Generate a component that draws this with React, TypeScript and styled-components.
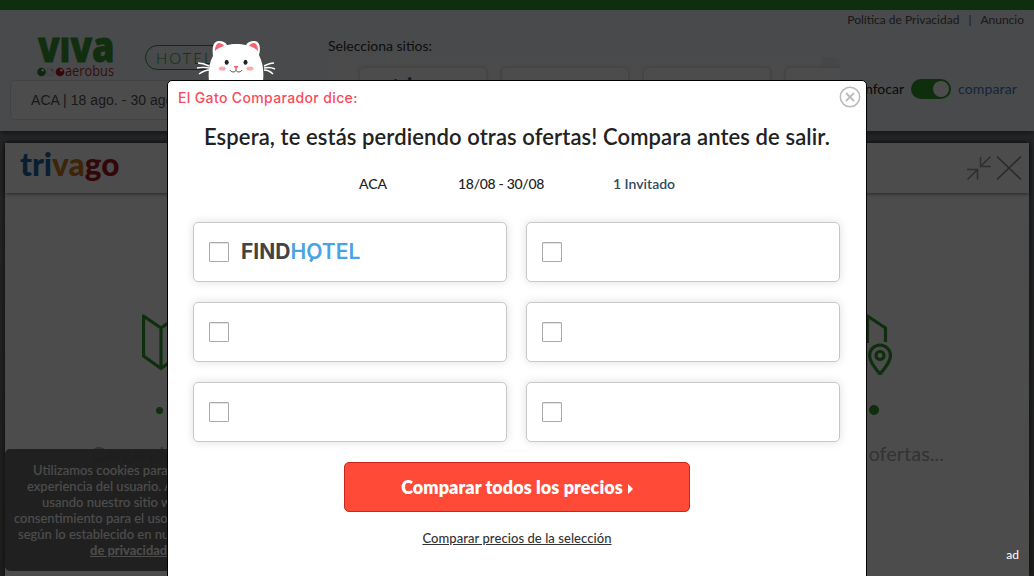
import React from 'react';
import styled, { createGlobalStyle } from 'styled-components';

const Global = createGlobalStyle`
  * { box-sizing: border-box; }
  html, body { margin: 0; height: 576px; overflow: hidden; }
  body { font-family: Lato, sans-serif; background: #7d828a; color: #222; }
`;

const Page = styled.div`
  position: relative;
  width: 1034px;
  height: 576px;
  overflow: hidden;
  display: flex;
  flex-direction: column;
  background: linear-gradient(#7c8188 0 30%, #6b6a66 100%);
`;

const Header = styled.header`
  display: grid;
  grid-template-columns: 328px 512px 194px;
  flex: none;
  height: 131px;
  border-top: 10px solid #309930;
  background: linear-gradient(#f5f7fa, #f7f9fd);
  box-shadow: 0 2px 6px rgba(0, 0, 0, 0.5);
`;

const BrandColumn = styled.div`
  display: flex;
  flex-direction: column;
  padding: 25px 0 0 10px;
`;

const BrandRow = styled.div`
  display: flex;
  height: 45px;
  padding-left: 26px;
`;

const HotelPill = styled.div`
  width: 90px;
  height: 25px;
  margin: 10px 0 0 29px;
  padding-left: 10px;
  border: 1px solid #309930;
  border-radius: 13px;
  color: #309930;
  font-size: 15px;
  font-weight: 300;
  line-height: 24px;
  letter-spacing: 2px;
`;

const SearchBox = styled.div`
  height: 40px;
  padding-left: 20px;
  border: 1px solid #dde0e8;
  border-radius: 4px;
  background: #fdfdff;
  font: 14px/38px 'Liberation Sans', sans-serif;
  letter-spacing: 0.05px;
  color: #555;
`;

const SitesColumn = styled.div`
  padding-top: 27px;
`;

const SitesLabel = styled.div`
  height: 20px;
  font-size: 14px;
  line-height: 17px;
  color: #333;
`;

const SitesStrip = styled.div`
  display: flex;
  gap: 14px;
  height: 64px;
  margin-left: 1px;
  padding: 10px 0 0 30px;
  overflow: hidden;
  border-radius: 5px;
  background: linear-gradient(90deg, #fbfbfb 96%, #e8eef8 97%);
`;

const SiteCard = styled.div`
  flex: none;
  width: 128px;
  padding: 8px 0 0 32px;
  border: 1px solid #e3e3e3;
  border-radius: 5px;
  background: #fdfdfd;
  box-shadow: 0 0 4px rgba(0, 0, 0, 0.12);
`;

const ToolsColumn = styled.div`
  display: flex;
  flex-direction: column;
  align-items: flex-end;
`;

const LegalLinks = styled.div`
  display: flex;
  gap: 9px;
  padding: 2px 10px 0 0;
  font-size: 12px;
  line-height: 16px;
  color: #555;
`;

const ToggleRow = styled.div`
  display: flex;
  align-items: center;
  gap: 7px;
  margin-top: 51px;
  padding-right: 17px;
  font-size: 14px;
  line-height: 20px;
  color: #222;
`;

const Toggle = styled.div`
  display: flex;
  justify-content: flex-end;
  width: 40px;
  height: 20px;
  padding: 2px;
  border-radius: 10px;
  background: #309930;

  &::after {
    content: '';
    width: 16px;
    border-radius: 50%;
    background: #fff;
  }
`;

const CompareLabel = styled.span`
  color: #3f7ecb;
  letter-spacing: 0.14px;
`;

const Panel = styled.section`
  flex: 1;
  display: flex;
  flex-direction: column;
  margin: 12px 5px 0;
  background: #fff;
  box-shadow: 0 0 7px rgba(0, 0, 0, 0.7);
`;

const PanelHeader = styled.div`
  display: flex;
  justify-content: space-between;
  height: 50px;
  padding: 7px 7px 0 15px;
  box-shadow: 0 1px 4px rgba(0, 0, 0, 0.5);
`;

const Loading = styled.div`
  display: flex;
  flex-direction: column;
  padding: 120px 85px 0 86px;
`;

const Maps = styled.div`
  display: flex;
  justify-content: space-between;
  padding: 0 52px 0 51px;
`;

const Dots = styled.div`
  display: flex;
  justify-content: space-between;
  align-items: center;
  height: 14px;
  margin-top: 28px;
  padding: 0 65px 0 65px;
`;

const Dot = styled.span<{ $size: number }>`
  width: ${(p) => p.$size}px;
  height: ${(p) => p.$size}px;
  border-radius: 50%;
  background: #309930;
`;

const LoadingText = styled.div`
  display: flex;
  justify-content: space-between;
  margin-top: 23px;
  font-size: 20px;
  line-height: 26px;
  color: #aaa;
`;

const CookieNotice = styled.aside`
  position: absolute;
  left: 5px;
  top: 449px;
  width: 320px;
  height: 122px;
  padding-top: 13px;
  border-radius: 5px;
  background: rgba(92, 92, 92, 0.9);
  color: #fff;
  font-size: 13px;
  font-weight: 500;
  line-height: 16px;
  white-space: nowrap;
`;

const CookieLine = styled.div<{ $indent: number }>`
  padding-left: ${(p) => p.$indent}px;
`;

const PolicyLink = styled.b`
  text-decoration: underline;
`;

const Overlay = styled.div`
  position: absolute;
  inset: 0;
  background: rgba(0, 0, 0, 0.7);
`;

const AdLabel = styled.span`
  position: absolute;
  right: 15px;
  bottom: 13px;
  font-size: 12px;
  line-height: 16px;
  color: #fff;
`;

const CatArt = styled.svg`
  position: absolute;
  left: 196px;
  top: 39px;
`;

const Modal = styled.div`
  position: absolute;
  left: 167px;
  top: 80px;
  width: 700px;
  height: 520px;
  display: flex;
  flex-direction: column;
  align-items: center;
  border: 1px solid #000;
  border-radius: 5px;
  background: #fff;
`;

const ModalTop = styled.div`
  display: flex;
  justify-content: space-between;
  align-self: stretch;
  height: 36px;
  padding: 5px 5px 0 10px;
`;

const CatSays = styled.div`
  font: 500 14px/24px Inter, sans-serif;
  letter-spacing: 0.36px;
  color: #fa4b5a;
`;

const Title = styled.h1`
  margin: 4px 0 0;
  font-size: 22px;
  font-weight: 600;
  line-height: 32px;
  letter-spacing: 0.1px;
  white-space: nowrap;
`;

const Details = styled.div`
  display: grid;
  grid-template-columns: 99px 155px 63px;
  margin: 21px 0 0 1px;
  font-size: 14px;
  font-weight: 500;
  line-height: 20px;
  white-space: nowrap;
`;

const Stay = styled.span`
  letter-spacing: -0.3px;
`;

const Guests = styled.span`
  color: #34495e;
  font-weight: 600;
`;

const Offers = styled.div`
  display: grid;
  grid-template-columns: 314px 314px;
  grid-auto-rows: 60px;
  gap: 20px 19px;
  margin: 28px 0 0 -1px;
`;

const Offer = styled.label`
  display: flex;
  align-items: center;
  gap: 12px;
  padding-left: 15px;
  border: 1px solid #c8c8c8;
  border-radius: 5px;
  background: #fff;
  box-shadow: 0 0 10px rgba(0, 0, 0, 0.13);
`;

const Checkbox = styled.span`
  width: 20px;
  height: 20px;
  border: 1px solid #aaa;
  border-radius: 1px;
  box-shadow: inset 0 1px 1px #e4e4e4;
`;

const CompareButton = styled.button`
  display: flex;
  align-items: center;
  justify-content: center;
  gap: 5px;
  width: 346px;
  height: 50px;
  margin-top: 20px;
  padding: 0;
  border: 1px solid #c9271b;
  border-radius: 5px;
  background: #ff4a38;
  color: #fff;
  font: 800 18px Lato, sans-serif;
  letter-spacing: 0.06px;
`;

const Arrow = styled.span`
  margin-top: 3px;
  border-left: 5px solid #fff;
  border-top: 5px solid transparent;
  border-bottom: 5px solid transparent;
`;

const SelectionLink = styled.a`
  margin-top: 17px;
  font-size: 13px;
  font-weight: 500;
  line-height: 18px;
  letter-spacing: 0.07px;
  color: #333;
  text-decoration: underline;
`;

const VivaLogo = () => (
  <svg width="80" height="44" viewBox="36 35 80 44">
    <g fill="#3a9a35" stroke="#3a9a35" strokeWidth="0.8" fontFamily="'Open Sans'" fontWeight="800">
      <text x="38" y="61.5" fontSize="33.5" textLength="54" lengthAdjust="spacingAndGlyphs">VIV</text>
      <text x="92" y="61.5" fontSize="43" textLength="22.500" lengthAdjust="spacingAndGlyphs">a</text>
    </g>
    <circle cx="41.5" cy="72" r="4.3" fill="#2f8535" />
    <circle cx="50.5" cy="72" r="4" fill="#eee" stroke="#ccc" strokeWidth="0.6" />
    <circle cx="60" cy="72" r="4.3" fill="#b8181c" />
    <circle cx="42.7" cy="70.200" r="1.2" fill="#fff" />
    <circle cx="52" cy="70.200" r="1" fill="#999" />
    <circle cx="61.3" cy="70.200" r="1.2" fill="#fff" />
    <text x="65" y="76" fontFamily="'Open Sans'" fontSize="14" fontWeight="500" fill="#b83030" textLength="49" lengthAdjust="spacingAndGlyphs">aerobus</text>
  </svg>
);

const TrivagoLogo = ({ width }: { width: number }) => (
  <svg width={width} height={width * 0.36} viewBox="0 0 100 36">
    <text y="26" fontFamily="Lato" fontWeight="900" fontSize="32" textLength="98.500" lengthAdjust="spacingAndGlyphs">
      <tspan fill="#1c68a8">tri</tspan>
      <tspan fill="#d07a1c">va</tspan>
      <tspan fill="#a81a20">go</tspan>
    </text>
  </svg>
);

const WindowIcons = () => (
  <svg width="60" height="36" viewBox="962 150 60 36" fill="none" stroke="#999" strokeWidth="1.500">
    <path d="M990.5 156.500 980.500 166.500M980.500 157v9.500H990.500M967 169.500H977.500V179.500M977.500 169.500 967.500 179.500" />
    <path d="M997 156.500 1021 179.500M1021 156.500 997 179.500" stroke="#8a8a8a" strokeWidth="1.700" />
  </svg>
);

const FoldedMap = ({ pin = false }: { pin?: boolean }) => (
  <svg width="54" height="62" viewBox="0 0 54 62" fill="none" stroke="#309930" strokeWidth="3.200" strokeLinejoin="round">
    {pin ? (
      <>
        <path d="M2 3v40l14 11V14ZM16 14 29.500 3V30M29.500 3 47.500 15V29" />
        <path d="M42 61C35 53 31.500 48 31.500 42.500a10.500 10.500 0 0 1 21 0C52.500 48 49 53 42 61Z" />
        <circle cx="42" cy="42.500" r="4" />
      </>
    ) : (
      <path d="M1.500 3V43L19 55.500 36 43V3L19 15ZM19 15V55" />
    )}
  </svg>
);

const Cat = () => (
  <CatArt width="80" height="42" viewBox="196 39 80 42">
    <path
      d="M209 81c-1-9 0-18 4-25-1-8 0-15 6-15 4 0 6 1 8 4 5-1.500 14-1.500 19 0 2-3 4-4 8-4 6 0 7 7 5 14 4 8 5 17 4 26Z"
      fill="#fff"
    />
    <path d="M215 51c0-5 2-8 4-8s4 1 5 3c-4 1-7 3-9 5ZM258 51c0-5-2-8-4-8s-4 1-5 3c4 1 7 3 9 5Z" fill="#fa6070" />
    <path
      d="M209 66c-4-2-7-3-11-3M209 68c-4-1-7-1-12 0M209 70c-4 0-7 2-10 4M264 66c4-2 6-3 10-3M264 68c4-1 7-1 11 1M264 70c4 0 7 2 9 4"
      fill="none"
      stroke="#fff"
      strokeWidth="1.400"
    />
    <ellipse cx="226.700" cy="62.300" rx="2" ry="2.500" fill="#222" />
    <ellipse cx="245.500" cy="62.300" rx="2" ry="2.500" fill="#222" />
    <ellipse cx="222.300" cy="68.600" rx="3.500" ry="2.200" fill="#f9acac" />
    <ellipse cx="250" cy="68.600" rx="3.500" ry="2.200" fill="#f9acac" />
    <path d="M233.500 66h5L236 69.500Z" fill="#fa6070" />
    <path d="M236 69v1.500c-1 2-5 2-6-.5M236 70.500c1 2 5 2 6-.5" fill="none" stroke="#555" />
  </CatArt>
);

const CloseIcon = () => (
  <svg width="22" height="22" viewBox="0 0 22 22" fill="none" stroke="#bbb">
    <circle cx="11" cy="11" r="9.700" strokeWidth="1.500" />
    <path d="M7 7l8 8M15 7l-8 8" strokeWidth="1.800" />
  </svg>
);

const FindHotelLogo = () => (
  <svg width="122" height="24" viewBox="241 240 122 24" fontFamily="Inter" fontSize="21">
    <text x="241" y="259" fontWeight="700" fill="#444" textLength="49.500" lengthAdjust="spacingAndGlyphs">FIND</text>
    <text x="290.500" y="259" fontWeight="600" fill="#4ba3e3" textLength="70" lengthAdjust="spacingAndGlyphs">HOTEL</text>
    <path d="M313 257 310.500 261.500" stroke="#4ba3e3" strokeWidth="3" />
  </svg>
);

const offers = ['findhotel', '', '', '', '', ''];

export default function App() {
  return (
    <>
      <Global />
      <Page>
        <Header>
          <BrandColumn>
            <BrandRow>
              <VivaLogo />
              <HotelPill>HOTEL</HotelPill>
            </BrandRow>
            <SearchBox>ACA | 18 ago. - 30 ago.</SearchBox>
          </BrandColumn>
          <SitesColumn>
            <SitesLabel>Selecciona sitios:</SitesLabel>
            <SitesStrip>
              <SiteCard><TrivagoLogo width={64} /></SiteCard>
              <SiteCard />
              <SiteCard />
              <SiteCard />
            </SitesStrip>
          </SitesColumn>
          <ToolsColumn>
            <LegalLinks>
              <span>Política de Privacidad</span>
              <span>|</span>
              <span>Anuncio</span>
            </LegalLinks>
            <ToggleRow>
              <span>Enfocar</span>
              <Toggle />
              <CompareLabel>comparar</CompareLabel>
            </ToggleRow>
          </ToolsColumn>
        </Header>
        <Panel>
          <PanelHeader>
            <TrivagoLogo width={101} />
            <WindowIcons />
          </PanelHeader>
          <Loading>
            <Maps>
              <FoldedMap />
              <FoldedMap pin />
            </Maps>
            <Dots>
              <Dot $size={7} />
              <Dot $size={10} />
            </Dots>
            <LoadingText>
              <span>Cargando</span>
              <span>ofertas...</span>
            </LoadingText>
          </Loading>
        </Panel>
        <CookieNotice>
          <CookieLine $indent={28}>Utilizamos cookies para</CookieLine>
          <CookieLine $indent={22}>experiencia del usuario. Al</CookieLine>
          <CookieLine $indent={37}>usando nuestro sitio web</CookieLine>
          <CookieLine $indent={9}>consentimiento para el uso</CookieLine>
          <CookieLine $indent={13}>según lo establecido en nuestra</CookieLine>
          <CookieLine $indent={85}><PolicyLink>de privacidad</PolicyLink></CookieLine>
        </CookieNotice>
        <Overlay />
        <AdLabel>ad</AdLabel>
        <Cat />
        <Modal>
          <ModalTop>
            <CatSays>El Gato Comparador dice:</CatSays>
            <CloseIcon />
          </ModalTop>
          <Title>Espera, te estás perdiendo otras ofertas! Compara antes de salir.</Title>
          <Details>
            <span>ACA</span>
            <Stay>18/08 - 30/08</Stay>
            <Guests>1 Invitado</Guests>
          </Details>
          <Offers>
            {offers.map((name, i) => (
              <Offer key={i}>
                <Checkbox />
                {name && <FindHotelLogo />}
              </Offer>
            ))}
          </Offers>
          <CompareButton>
            Comparar todos los precios
            <Arrow />
          </CompareButton>
          <SelectionLink>Comparar precios de la selección</SelectionLink>
        </Modal>
      </Page>
    </>
  );
}
